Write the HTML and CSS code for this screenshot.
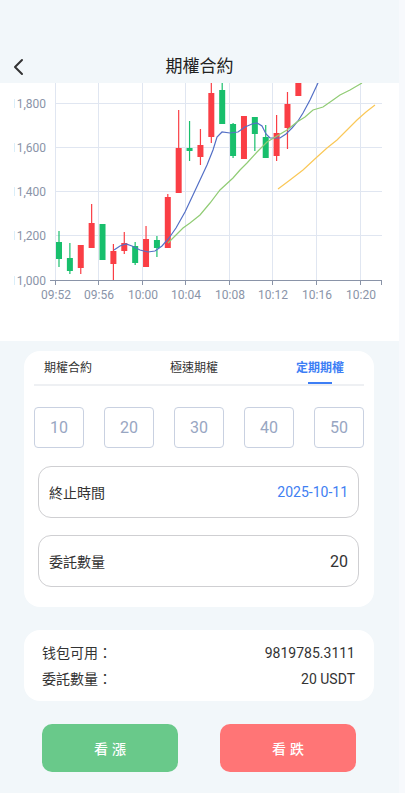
FILE: index.html
```html
<!DOCTYPE html>
<html lang="zh-Hant">
<head>
    <meta charset="UTF-8">
    <meta name="viewport" content="width=device-width, initial-scale=1.0">
    <title>期權合約</title>
    <link rel="stylesheet" href="styles.css">
</head>
<body>
    <div class="app">
        <header class="topbar">
            <button class="back" aria-label="back">
                <svg width="12" height="18" viewBox="0 0 12 18"><path d="M9 2 L2 9 L9 16" fill="none" stroke="#333" stroke-width="2" stroke-linecap="round" stroke-linejoin="round"/></svg>
            </button>
            <h1 class="title">期權合約</h1>
            <span></span>
        </header>

        <div class="chart">
            <svg width="399" height="258" viewBox="0 83 399 258">
                <defs>
                    <clipPath id="plot"><rect x="14.5" y="83" width="385" height="258"/></clipPath>
                </defs>
                <g clip-path="url(#plot)">
                    <!-- grid -->
                    <g stroke="#e0e6f1" stroke-width="1">
                        <line x1="55" y1="103.5" x2="382" y2="103.5"/>
                        <line x1="55" y1="147.5" x2="382" y2="147.5"/>
                        <line x1="55" y1="191.5" x2="382" y2="191.5"/>
                        <line x1="55" y1="235.5" x2="382" y2="235.5"/>
                        <line x1="55.5" y1="83" x2="55.5" y2="280"/>
                        <line x1="98.5" y1="83" x2="98.5" y2="280"/>
                        <line x1="142.5" y1="83" x2="142.5" y2="280"/>
                        <line x1="185.5" y1="83" x2="185.5" y2="280"/>
                        <line x1="229.5" y1="83" x2="229.5" y2="280"/>
                        <line x1="272.5" y1="83" x2="272.5" y2="280"/>
                        <line x1="316.5" y1="83" x2="316.5" y2="280"/>
                        <line x1="360.5" y1="83" x2="360.5" y2="280"/>
                    </g>
                    <g stroke="#8a94a8" stroke-width="1">
                        <line x1="50" y1="280.5" x2="382" y2="280.5"/>
                        <line x1="55.5" y1="280" x2="55.5" y2="285"/>
                        <line x1="98.5" y1="280" x2="98.5" y2="285"/>
                        <line x1="142.5" y1="280" x2="142.5" y2="285"/>
                        <line x1="185.5" y1="280" x2="185.5" y2="285"/>
                        <line x1="229.5" y1="280" x2="229.5" y2="285"/>
                        <line x1="272.5" y1="280" x2="272.5" y2="285"/>
                        <line x1="316.5" y1="280" x2="316.5" y2="285"/>
                        <line x1="360.5" y1="280" x2="360.5" y2="285"/>
                        <line x1="381.5" y1="280" x2="381.5" y2="285"/>
                    </g>
                    <g class="axis-label" text-anchor="end">
                        <text x="46" y="107.5">11,800</text>
                        <text x="46" y="151.5">11,600</text>
                        <text x="46" y="195.5">11,400</text>
                        <text x="46" y="239.5">11,200</text>
                        <text x="46" y="284.5">11,000</text>
                    </g>
                    <g class="axis-label" text-anchor="middle">
                        <text x="56" y="299">09:52</text>
                        <text x="99" y="299">09:56</text>
                        <text x="143" y="299">10:00</text>
                        <text x="186" y="299">10:04</text>
                        <text x="230" y="299">10:08</text>
                        <text x="273" y="299">10:12</text>
                        <text x="317" y="299">10:16</text>
                        <text x="361" y="299">10:20</text>
                    </g>
                    <g id="candles"></g>
                    <!-- moving averages -->
                    <polyline fill="none" stroke="#5470c6" stroke-width="1.2" points="114,250 120,246 126,244 132,246 140,250 148,252 155,251 162,246 169,238 176,228 185,212 193,195 200,180 207,165 213,150 217,137 222,132 230,133 238,132 245,127 252,124 257,123 262,126 266,134 270,138 280,138 286,134 292,128 298,121 303,113 310,100 318,83"/>
                    <polyline fill="none" stroke="#91cc75" stroke-width="1.2" points="168,243 175,236 183,228 190,223 200,215 210,203 220,190 233,178 240,170 247,163 257,152 267,142 277,136 287,130 297,122 305,117 313,110 323,107 333,100 340,95 350,90 362,83"/>
                    <polyline fill="none" stroke="#fac858" stroke-width="1.2" points="278,189 290,180 303,170 317,157 327,148 337,140 347,130 357,120 366,112 375,105"/>
                </g>
            </svg>
        </div>

        <section class="card order">
            <nav class="tabs">
                <span class="tab">期權合約</span>
                <span class="tab">極速期權</span>
                <span class="tab active">定期期權</span>
            </nav>
            <div class="amounts">
                <button class="amount">10</button>
                <button class="amount">20</button>
                <button class="amount">30</button>
                <button class="amount">40</button>
                <button class="amount">50</button>
            </div>
            <div class="field">
                <span class="label">終止時間</span>
                <span class="value date">2025-10-11</span>
            </div>
            <div class="field">
                <span class="label">委託數量</span>
                <span class="value qty">20</span>
            </div>
        </section>

        <section class="card summary">
            <div class="row"><span>钱包可用：</span><span class="num">9819785.3111</span></div>
            <div class="row"><span>委託數量：</span><span class="num">20 USDT</span></div>
        </section>

        <div class="actions">
            <button class="btn up">看漲</button>
            <button class="btn down">看跌</button>
        </div>
    </div>

    <script>
        // body top, body bottom, wick top, wick bottom, red?
        const candles = [
            [242, 259, 231, 267, 0], [258, 271, 243, 274, 0], [245, 268, 245, 274, 1],
            [223, 248, 204, 248, 1], [224, 260, 224, 260, 0], [251, 264, 244, 280, 1],
            [243, 251, 232, 254, 1], [246, 263, 242, 265, 0], [239, 267, 226, 267, 1],
            [240, 248, 236, 257, 0], [197, 248, 194, 248, 1], [148, 193, 110, 193, 1],
            [148, 151, 121, 161, 0], [145, 157, 129, 165, 1], [93, 137, 80, 143, 1],
            [90, 124, 80, 124, 0], [124, 156, 123, 158, 0], [116, 159, 116, 159, 1],
            [117, 134, 117, 151, 0], [137, 158, 125, 158, 0], [133, 156, 115, 161, 1],
            [104, 128, 92, 149, 1], [70, 96, 70, 96, 1]
        ];
        const g = document.getElementById('candles');
        const ns = 'http://www.w3.org/2000/svg';
        candles.forEach((c, i) => {
            const x = 59 + i * 10.88;
            const color = c[4] ? '#fa3e45' : '#18bf6c';
            const wick = document.createElementNS(ns, 'line');
            wick.setAttribute('x1', x); wick.setAttribute('x2', x);
            wick.setAttribute('y1', c[2]); wick.setAttribute('y2', c[3]);
            wick.setAttribute('stroke', color);
            wick.setAttribute('stroke-width', '1.2');
            g.appendChild(wick);
            const body = document.createElementNS(ns, 'rect');
            body.setAttribute('x', x - 3); body.setAttribute('width', 6);
            body.setAttribute('y', c[0]); body.setAttribute('height', c[1] - c[0]);
            body.setAttribute('fill', color);
            g.appendChild(body);
        });
    </script>
</body>
</html>
```

FILE: styles.css
```css
* {
    margin: 0;
    padding: 0;
    box-sizing: border-box;
}

body {
    background: #f7f9fc;
    font-family: Roboto, 'Noto Sans CJK TC', 'Noto Sans CJK SC', sans-serif;
    color: #333;
}

button {
    font-family: inherit;
    border: none;
    background: none;
    cursor: pointer;
}

.app {
    width: 399px;
    min-height: 793px;
    background: #f2f7fa;
}

.topbar {
    height: 83px;
    padding-top: 50px;
    display: grid;
    grid-template-columns: 40px 1fr 40px;
    align-items: center;
}

.back {
    display: flex;
    align-items: center;
    padding-left: 13px;
    height: 33px;
}

.title {
    text-align: center;
    font-size: 17px;
    font-weight: 400;
    color: #222;
    line-height: 33px;
}

.chart {
    background: #fff;
    height: 258px;
}

.chart svg {
    display: block;
}

.axis-label {
    font-family: Roboto, sans-serif;
    font-size: 12px;
    fill: #8a94a8;
}

.card {
    background: #fff;
    border-radius: 16px;
    margin: 0 25px 0 24px;
}

.order {
    margin-top: 10px;
    padding: 0 10px 20px;
}

.tabs {
    display: flex;
    justify-content: space-between;
    padding: 0 20px 0 10px;
    height: 35px;
    border-bottom: 2px solid #eef0f3;
}

.tab {
    position: relative;
    font-size: 12px;
    line-height: 34px;
    color: #333;
}

.tab.active {
    color: #3d7ef5;
    font-weight: 700;
}

.tab.active::after {
    content: "";
    position: absolute;
    left: 50%;
    bottom: 0;
    width: 24px;
    height: 2px;
    margin-left: -12px;
    background: #3d7ef5;
}

.amounts {
    display: flex;
    justify-content: space-between;
    margin-top: 21px;
}

.amount {
    width: 50px;
    height: 41px;
    border: 1px solid #c9d1e1;
    border-radius: 4px;
    font-size: 16px;
    color: #98a6c2;
}

.field {
    display: flex;
    justify-content: space-between;
    align-items: center;
    height: 52px;
    margin: 18px 5px 0 4px;
    padding: 0 10px;
    border: 1px solid #cfcfd2;
    border-radius: 13px;
}

.field + .field {
    margin-top: 17px;
}

.label {
    font-size: 14px;
    color: #333;
}

.date {
    font-size: 14px;
    color: #3f80f2;
}

.qty {
    font-size: 16px;
    color: #333;
}

.summary {
    margin-top: 23px;
    padding: 10px 19px 9px 18px;
}

.row {
    display: flex;
    justify-content: space-between;
    font-size: 14px;
    line-height: 26px;
    color: #333;
}

.actions {
    display: flex;
    justify-content: space-between;
    padding: 0 43px 0 42px;
    margin-top: 23px;
}

.btn {
    width: 136px;
    height: 48px;
    border-radius: 10px;
    color: #fff;
    font-size: 14px;
    font-weight: 500;
    letter-spacing: 4px;
    padding-left: 4px;
}

.up {
    background: #69c98a;
}

.down {
    background: #ff7576;
}
```
